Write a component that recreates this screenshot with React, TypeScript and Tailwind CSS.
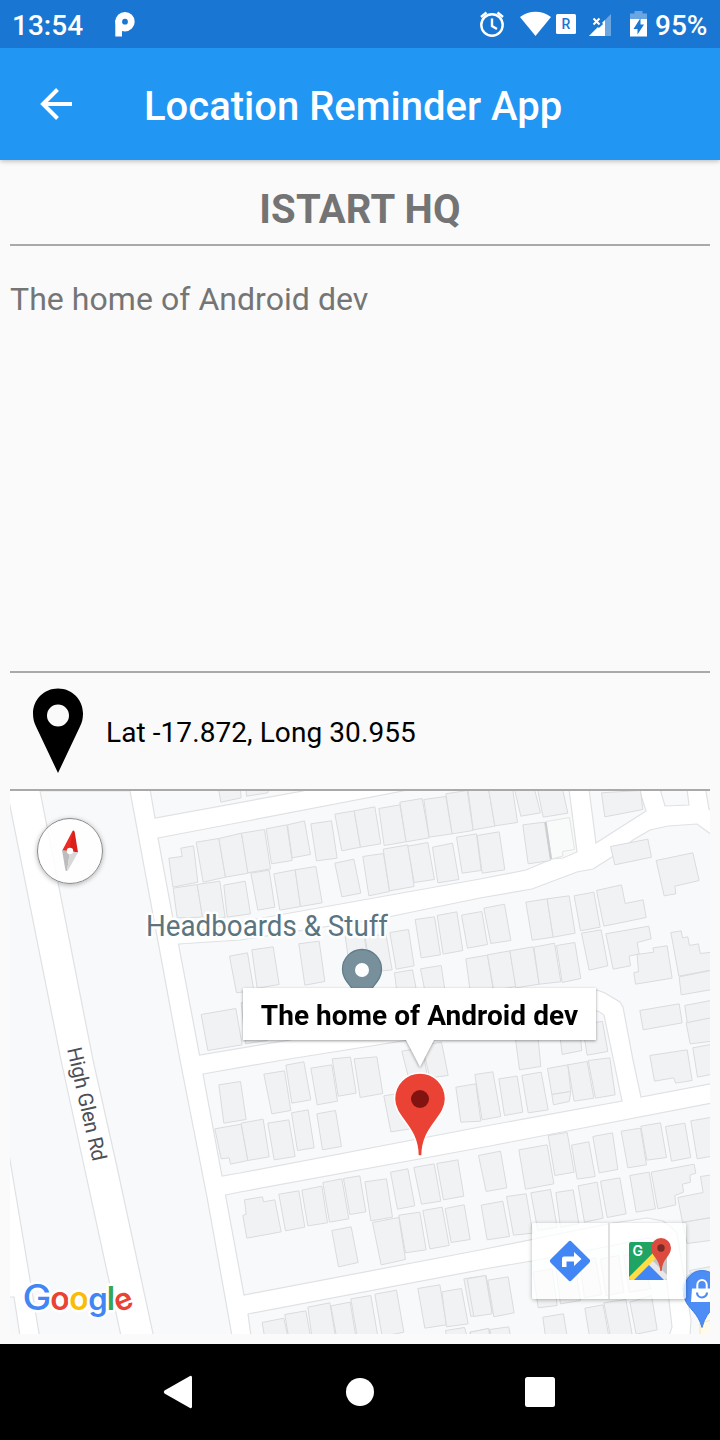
import React from "react";

const blocks = [
  "40,791 130,791 180,1060 207,1197 232,1336 153.5,1336 117,1167 93,1060",
  "8,796 61,1060 121,1336 39.5,1336 10,1160 8,1150",
  "8,1297 14,1297 20,1336 8,1336",
  "150,789 155,818 303,791 310,789",
  "158,838 250,820.5 403,791 410,789 569,789 577,852 563,858 552,859 526,870 480,879 240,922 176,935",
  "178.5,944 240,940 388,917 480,898 532,889 577,872 593,869 612,857 633,840 650,830 668,826 697,824 712,835 712,1083.5 641,1097 633,1060 623,1007 620,1002 605,993 597,990 580,991 290,1040 199.5,1055",
  "203,1074 283,1060 590,1011 598,1011 604,1015 613.5,1060 622,1101 480,1127 240,1173 222,1176",
  "225.5,1195 240,1192 490,1146 712,1103 712,1336 690,1336 691,1320 677,1233 671,1227 663,1221 647,1218 613,1223 480,1250 244,1295",
  "248,1314 490,1268 532,1261 610,1246 647,1238 658,1240 663,1248 672,1327 669,1336 251,1336",
  "589,789 596,843 646,811 639,789",
  "660,789 665,806 689,805 687,789",
  "705.5,789 709,809 712,811 712,789",
];

const tiles = [
  {
    x: 0, y: 780,
    shapes: [
      "655,30 661,65 722,52 720,30",
      "505,233 545,228 541,203 579,196 592,305 517,320",
      "587,185 655,174 675,290 608,305",
      "655,174 723,158 743,278 675,290",
      "518,323 590,312 606,410 530,412",
      "590,312 658,302 674,412 606,410",
      "670,314 734,302 750,400 680,410",
      "687,527 741,517 760,630 708,637",
      "602,702 706,684 725,793 622,810",
      "722,667 790,660 800,780 735,790",
    ],
  },
  {
    x: 240, y: 780,
    shapes: [
      "17,30 18,47 82,37 84,30",
      "3,158 72,147 90,265 22,277",
      "77,145 139,133 155,240 93,250",
      "141,133 192,121 210,222 155,232",
      "211,130 273,121 290,233 228,241",
      "283,101 341,91 360,200 304,211",
      "341,91 403,79 421,190 360,200",
      "415,84 478,73 497,184 431,195",
      "478,65 545,54 566,172 497,184",
      "550,57 616,48 635,160 566,170",
      "616,40 680,30 698,150 635,160",
      "683,30 745,30 763,137 698,148",
      "31,278 86,269 103,380 52,389",
      "100,280 164,268 180,378 118,389",
      "164,268 226,258 245,367 180,378",
      "283,248 340,236 361,338 304,349",
      "367,228 429,219 447,333 385,346",
      "428,206 502,193 521,318 447,331",
      "502,197 562,186 582,297 521,306",
      "576,200 636,188 655,297 592,307",
      "648,170 708,160 722,270 665,278",
      "710,165 776,154 793,268 725,278",
      "175,490 236,482 253,603 193,614",
      "34,508 98,499 116,612 50,623",
      "314,467 370,460 388,572 330,580",
      "374,470 436,460 455,568 390,575",
      "448,456 504,447 521,556 467,566",
      "524,417 582,409 600,523 542,532",
      "590,405 649,394 667,510 608,521",
      "663,404 724,393 741,492 681,503",
      "462,577 516,568 530,640 470,640",
      "540,565 602,555 615,640 555,640",
      "676,535 741,524 760,640 690,640",
      "484,812 545,802 560,885 505,895",
      "545,795 603,785 623,885 568,892",
    ],
  },
  {
    x: 480, y: 780,
    shapes: [
      "25,30 97,30 111,126 43,136",
      "103,30 163,30 180,97 121,107",
      "172,30 247,30 262,98 188,110",
      "127,133 192,125 210,240 143,250",
      "363,37 480,30 487,87 373,109",
      "390,198 502,176 513,230 403,253",
      "527,240 637,217 656,300 583,317 586,340 551,346",
      "10,383 72,371 91,480 31,489",
      "136,365 200,355 218,470 155,479",
      "200,355 266,346 284,458 218,470",
      "281,346 340,335 359,440 300,451",
      "348,330 423,313 434,369 488,358 497,411 370,437",
      "303,458 362,448 382,556 326,569",
      "376,460 505,437 512,475 470,486 476,520 446,527 450,556 398,566",
      "470,522 520,515 517,502 560,496 575,593 465,611 460,576 474,574",
      "571,456 602,451 606,472 622,469 627,495 654,490 659,519 696,515 696,568 595,587",
      "596,589 696,569 696,627 602,643",
      "478,690 596,670 605,727 488,748",
      "613,675 696,659 696,712 620,727",
      "617,727 696,711 696,782 629,790",
      "508,825 620,808 635,900 585,908 580,892 522,902",
      "637,802 696,791 696,881 651,890",
      "21,523 88,511 106,618 40,630",
      "88,511 158,499 176,611 106,622",
      "160,500 222,488 241,604 176,611",
      "228,495 283,486 301,594 245,606",
      "105,775 172,765 181,858 117,868",
      "235,740 295,728 304,810 245,822",
      "305,730 366,723 382,813 320,824",
    ],
  },
  {
    x: 0, y: 1060,
    shapes: [
      "655,73 720,63 737,177 670,188",
      "643,205 722,191 742,300 690,311 686,292 662,295",
    ],
  },
  {
    x: 240, y: 1060,
    shapes: [
      "2,188 68,176 86,289 22,300",
      "12,418 66,409 69,424 103,418 122,514 19,533 7,465 17,461",
      "70,41 132,31 151,150 94,160",
      "136,14 190,4 211,118 154,128",
      "211,23 274,13 291,122 230,133",
      "275,-5 330,-10 347,98 293,107",
      "341,-5 409,-11 427,99 359,111",
      "82,188 145,178 164,288 101,298",
      "153,157 203,148 221,262 171,270",
      "229,160 285,150 303,258 246,268",
      "430,106 490,96 510,205 451,214",
      "646,80 706,70 721,182 661,185",
      "703,42 757,34 781,168 725,178",
      "115,401 175,391 193,500 135,511",
      "184,389 244,377 261,487 202,496",
      "247,366 304,355 325,475 267,485",
      "309,354 358,346 376,454 328,462",
      "373,364 438,355 456,470 391,481",
      "450,335 502,325 523,436 471,446",
      "520,321 581,310 601,422 543,431",
      "589,309 652,298 670,407 609,418",
      "714,285 780,272 799,382 737,393",
      "396,486 475,471 495,597 422,613",
      "475,464 538,455 557,568 495,577",
      "547,450 605,440 626,555 568,565",
      "614,444 671,433 689,537 632,546",
      "722,434 787,422 807,528 740,538",
      "274,510 332,499 353,606 294,619",
      "65,786 130,773 142,828 72,828",
      "133,762 196,751 210,828 144,828",
      "202,740 268,727 285,828 214,828",
      "271,736 329,725 346,828 288,828",
      "331,715 391,705 412,828 350,828",
      "403,701 468,689 490,815 425,828",
      "532,684 598,673 618,793 553,803",
      "604,694 663,684 683,790 618,799",
      "670,655 737,645 755,757 691,768",
      "615,810 672,801 680,828 618,828",
      "688,815 745,804 750,828 690,828",
    ],
  },
  {
    x: 480, y: 1060,
    shapes: [
      "55,55 110,47 127,155 72,165",
      "124,45 182,35 203,148 143,157",
      "201,24 262,13 271,93 214,102",
      "214,102 271,93 266,123 219,133",
      "262,13 320,3 340,113 281,122",
      "323,0 388,-8 404,103 345,113",
      "115,268 200,253 220,370 135,386",
      "203,225 260,216 281,335 223,345",
      "273,254 325,244 344,348 290,356",
      "337,228 396,217 412,327 356,337",
      "422,212 480,203 498,313 442,322",
      "481,197 540,187 558,291 499,299",
      "555,198 613,188 631,291 573,302",
      "631,181 696,170 696,287 650,295",
      "448,345 506,335 525,445 467,455",
      "512,335 641,311 646,338 628,344 630,365 606,371 609,395 583,405 586,433 532,445",
      "660,348 696,343 696,470 606,486 592,411 668,396",
      "606,486 696,471 696,539 620,549",
      "78,408 137,400 157,518 99,524",
      "151,397 210,387 230,500 172,510",
      "226,396 278,388 295,490 240,500",
      "293,376 350,365 368,473 312,485",
      "360,362 418,352 437,460 380,471",
      "-40,655 15,645 35,760 -20,768",
      "22,659 83,649 101,757 40,769",
      "158,635 215,625 230,735 173,742",
      "225,618 283,608 300,720 240,730",
      "298,602 345,593 363,702 312,712",
      "360,595 415,585 430,695 377,705",
      "430,585 483,576 510,685 447,695",
      "187,770 249,760 260,828 195,828",
      "313,743 368,733 385,828 327,828",
      "370,727 436,717 456,828 390,828",
      "448,725 513,705 530,808 467,821",
      "28,807 85,799 90,828 32,828",
      "-30,815 24,804 28,828 -30,828",
      "628,630 696,617 696,680 640,690",
    ],
  },
];

function StreetMap() {
  return (
    <svg className="block h-[543px] w-[700px]" viewBox="10 791 700 543">
      <rect x="10" y="791" width="700" height="543" fill="#fff" />
      <g fill="#f8f9fb" stroke="#e0e1e4" strokeWidth="1.2">
        {blocks.map((b) => <polygon key={b} points={b} />)}
      </g>
      <g transform="translate(0.5 0.5)" fill="#f1f2f4" stroke="#dadbde" strokeWidth="3">
        {tiles.map((t) => (
          <g key={`${t.x}-${t.y}`} transform={`translate(${t.x} ${t.y}) scale(0.33333)`}>
            {t.shapes.map((s) => <polygon key={s} points={s} />)}
          </g>
        ))}
      </g>
      <path d="M546 821.5L569.5 817.5L574.5 849.5L562.5 851.5L563 856L551.5 859Z" fill="#f9fbfa" stroke="#e3e5e4" />
      <path d="M545.5 822L551 859" stroke="#cccdce" strokeWidth="2" />
      <path d="M700 1323L712 1320V1336H700Z" fill="#fffaea" stroke="#fce5a5" />

      <text transform="translate(67 1049) rotate(77.2)" fontFamily="Roboto, sans-serif" fontSize="20.5" textLength="116" fill="#4c5056" stroke="#fff" strokeWidth="3" paintOrder="stroke">High Glen Rd</text>
      <text x="146" y="935.500" fontFamily="Roboto, sans-serif" fontSize="29.500" textLength="242" lengthAdjust="spacingAndGlyphs" fill="#5b7480" stroke="#fff" strokeWidth="5" strokeLinejoin="round" paintOrder="stroke">Headboards &amp; Stuff</text>

      <path d="M362 949.5a19.5 19.5 0 0 0-19.5 20c0 10 8 15 13 24h13c5-9 13-14 13-24a19.5 19.5 0 0 0-19.5-20Z" fill="#78909c" stroke="#607d8b" strokeWidth="1.3" />
      <circle cx="362" cy="970" r="7" fill="#fff" />

      <path d="M682 1290a19 19 0 0 1 20-20v45Z" fill="#c5dafb" />
      <path d="M702 1270.500c-10 0-18 9-18 20c0 3-1 6 1 9c3 9 13 13 17 28c5-20 19-21 19-37c0-11-8-20-19-20Z" fill="#4d8df6" stroke="#3f7fe8" strokeWidth="1" />
      <path d="M692 1288.500h20v13.500h-21Z" fill="#fff" />
      <path d="M697.300 1289v-4a4.700 5 0 0 1 9.400 0v4" fill="none" stroke="#fff" strokeWidth="2" />
      <path d="M697 1292.500a5 5 0 0 0 10 0" fill="none" stroke="#4d8df6" strokeWidth="2.200" />

      <path d="M420 1073c-14 0-25.500 11.500-25.500 26c0 19 23.500 27 23.500 57h4c0-30 23.500-38 23.500-57c0-14.500-11.500-26-25.500-26Z" fill="#ea4335" stroke="#fff" strokeWidth="1.500" />
      <circle cx="420" cy="1099" r="9" fill="#811411" />
      <g fontFamily="Inter, sans-serif" fontSize="32" fontWeight="600" textAnchor="middle" stroke="#fff" strokeWidth="5" strokeLinejoin="round" paintOrder="stroke">
        <text x="37" y="1310" fontSize="35.500" textLength="29" lengthAdjust="spacingAndGlyphs" fontWeight="500" fill="#4285f4">G</text>
        <text x="60" y="1310" fill="#ea4335">o</text>
        <text x="79" y="1310" fill="#fbbc05">o</text>
        <text x="98" y="1310" fontSize="31" fill="#4285f4">g</text>
        <text x="111" y="1309.500" fill="#34a853">l</text>
        <text transform="translate(123.500 1301.500) rotate(-22)" x="0" y="8.500" fontSize="31" fill="#ea4335">e</text>
      </g>
    </svg>
  );
}

function Compass() {
  return (
    <div className="absolute top-[27px] left-[27px] h-[66px] w-[66px] rounded-full border border-[#8b8b8b] bg-white/85 shadow-[0_1px_5px_rgba(0,0,0,0.3)]">
      <svg className="block h-full w-full" viewBox="38 819 64 64">
        <path d="M73.500 830.500Q72.500 830.500 72 832L62 851L70 851Z" fill="#ee2a24" />
        <path d="M73 830.500Q74.500 830.500 74.700 832L78 852.500L69 851Z" fill="#d9201b" />
        <path d="M62 850L70 851L67 871Q65.500 871 65.300 869.500Z" fill="#bdbdbd" />
        <path d="M78 852.500L70 851L67 871Q68 870.500 68.500 869.500Z" fill="#d8d8d8" />
        <circle cx="70" cy="851" r="3.200" fill="#fff" />
      </svg>
    </div>
  );
}

function InfoWindow() {
  return (
    <div className="absolute top-[197px] left-[233px] drop-shadow-[0_1px_1.5px_rgba(0,0,0,0.4)]">
      <div className="flex h-[52px] w-[353px] items-center justify-center bg-white pt-[3px]">
        <span className="text-[28px] leading-none font-bold tracking-[0.05px] whitespace-nowrap text-black">The home of Android dev</span>
      </div>
      <svg className="ml-[163px] block h-[27px] w-[28px]" viewBox="0 0 28 27">
        <path d="M0 0H28L14 27Z" fill="#fff" />
      </svg>
    </div>
  );
}

function MapButtons() {
  return (
    <div className="absolute top-[432px] left-[522px] flex h-[76px] w-[154px] rounded-[2px] bg-white/75 shadow-[0_1px_4px_rgba(0,0,0,0.3)]">
      <button className="flex w-[76px] items-center justify-center" aria-label="Directions">
        <svg className="h-[42px] w-[42px]" viewBox="0 0 42 42">
          <path d="M19.300 1.700a2.400 2.400 0 0 1 3.400 0L40.300 19.300a2.400 2.400 0 0 1 0 3.400L22.700 40.300a2.400 2.400 0 0 1-3.400 0L1.700 22.700a2.400 2.400 0 0 1 0-3.400Z" fill="#4285f4" />
          <path d="M13 27V18.500a2 2 0 0 1 2-2H25V12L32.500 19L25 26V21.500H17.500V27Z" fill="#fff" />
        </svg>
      </button>
      <div className="w-[2px] bg-[#e1e1e1]" />
      <button className="flex flex-1 items-center justify-center" aria-label="Open map">
        <svg className="h-[44px] w-[44px] translate-x-[2px] -translate-y-[2px]" viewBox="628 1237 44 44">
          <clipPath id="tile"><rect x="629" y="1242" width="38" height="38" rx="2" /></clipPath>
          <g clipPath="url(#tile)">
            <rect x="629" y="1242" width="38" height="38" fill="#1fa463" />
            <path d="M648 1261L667 1242V1280Z" fill="#c4c4c4" />
            <path d="M629 1283L648 1263L668 1283Z" fill="#4285f4" />
            <path d="M647 1263L651 1259L672 1280L667 1283Z" fill="#e8e8e8" />
            <path d="M626 1280L655 1251L659 1255L631 1283Z" fill="#ffdd48" />
          </g>
          <text x="632.500" y="1256" fontFamily="Inter, sans-serif" fontSize="14" fontWeight="600" fill="#fff">G</text>
          <path d="M661 1238a10 10 0 0 0-10 10c0 8 9 11 9.300 23h1.400c.3-12 9.300-15 9.300-23a10 10 0 0 0-10-10Z" fill="#dd4b3e" />
          <circle cx="661" cy="1248" r="3.700" fill="#7b2b25" />
        </svg>
      </button>
    </div>
  );
}

function StatusBar() {
  return (
    <div className="z-20 flex h-12 shrink-0 bg-[#1976d2] text-white">
      <div className="w-[112px] pt-[10px] pl-[12px] text-[28px] leading-8 font-medium">13:54</div>
      <svg className="h-12 w-[30px]" viewBox="112 0 30 48">
        <circle cx="125" cy="21.700" r="6.300" fill="none" stroke="#fff" strokeWidth="6.800" />
        <rect x="115.300" y="20" width="6.700" height="16.500" fill="#fff" />
      </svg>
      <svg className="ml-[328px] h-12 w-[182px]" viewBox="470 0 182 48">
        <g fill="none" stroke="#fff" strokeWidth="2.400">
          <circle cx="492" cy="25" r="10.700" />
          <path d="M492 18.500V26L497 29M481 17L486.500 12.500M503 17L497.500 12.500" />
        </g>
        <path d="M520 17C529 10 542 10 551 17L535.500 36Z" fill="#fff" />
        <rect x="556" y="14" width="20" height="20" rx="1.500" fill="#fff" />
        <text x="561.500" y="29" fontFamily="Roboto, sans-serif" fontWeight="500" fontSize="14" fill="#1976d2">R</text>
        <path d="M611 14V36H589Z" fill="#6ca6e2" />
        <path d="M605 20V36H589Z" fill="#fff" />
        <path d="M592 17L601 26" stroke="#1976d2" strokeWidth="6" />
        <path d="M593.500 18.500L599.500 24.500M599.500 18.500L593.500 24.500" stroke="#fff" strokeWidth="2" />
        <path d="M634.500 11H642.500V13.500H647V19H630V13.500H634.500Z" fill="#6ca6e2" />
        <path d="M630 19H647V36.500H630Z" fill="#fff" />
        <path d="M640.500 18L633.500 29H637.500V34.500L644 24.500H640.500Z" fill="#1976d2" />
      </svg>
      <div className="pt-[10px] pl-[3px] text-[28px] leading-8 font-medium">95%</div>
    </div>
  );
}

export default function App() {
  return (
    <div className="flex h-[1440px] w-[720px] flex-col overflow-hidden bg-[#fafafa] font-['Roboto',sans-serif]">
      <StatusBar />
      <header className="z-10 flex h-28 shrink-0 items-center bg-[#2196f3] text-white shadow-[0_1px_5px_rgba(0,0,0,0.28)]">
        <svg className="ml-10 h-8 w-8" viewBox="0 0 32 32" fill="none" stroke="#fff" strokeWidth="4">
          <path d="M32 16H4M17.500 1.500L3 16L17.500 30.500" />
        </svg>
        <h1 className="ml-[72px] pt-[6px] text-[40px] leading-none font-medium whitespace-nowrap">Location Reminder App</h1>
      </header>
      <main className="flex flex-1 flex-col px-[10px]">
        <h2 className="h-[86px] border-b-2 border-[#a9a9a9] pt-[26px] text-center text-[40px] leading-[48px] font-bold tracking-[0.2px] text-[#747474]">ISTART HQ</h2>
        <p className="h-[427px] border-b-2 border-[#a9a9a9] pt-[33px] text-[32px] leading-10 tracking-[0.05px] text-[#757575]">The home of Android dev</p>
        <div className="flex h-[118px] border-b-2 border-[#a9a9a9]">
          <svg className="mt-[15px] ml-[22px] h-[86px] w-[52px]" viewBox="32 688 52 86">
            <path fillRule="evenodd" d="M58 688.500c-14 0-25 11-25 25c0 5 1 9 3 13L58 773L80 726.500c2-4 3-8 3-13c0-14-11-25-25-25ZM58 704.500a11 11 0 1 1 0 22a11 11 0 0 1 0-22Z" />
          </svg>
          <span className="mt-[44px] ml-[22px] text-[28px] leading-8 tracking-[0.08px] text-black">Lat -17.872, Long 30.955</span>
        </div>
        <section className="relative h-[543px] w-[700px] overflow-hidden">
          <StreetMap />
          <Compass />
          <InfoWindow />
          <MapButtons />
        </section>
      </main>
      <nav className="h-24 shrink-0 bg-black">
        <svg className="block h-24 w-full" viewBox="0 1344 720 96" fill="#fff">
          <path d="M164.500 1390.500Q163 1392 164.500 1393.500L190 1408Q192 1409 192 1406.500V1377.500Q192 1375 190 1376Z" />
          <circle cx="360" cy="1392" r="14" />
          <rect x="525" y="1377" width="30" height="30" rx="2.500" />
        </svg>
      </nav>
    </div>
  );
}
